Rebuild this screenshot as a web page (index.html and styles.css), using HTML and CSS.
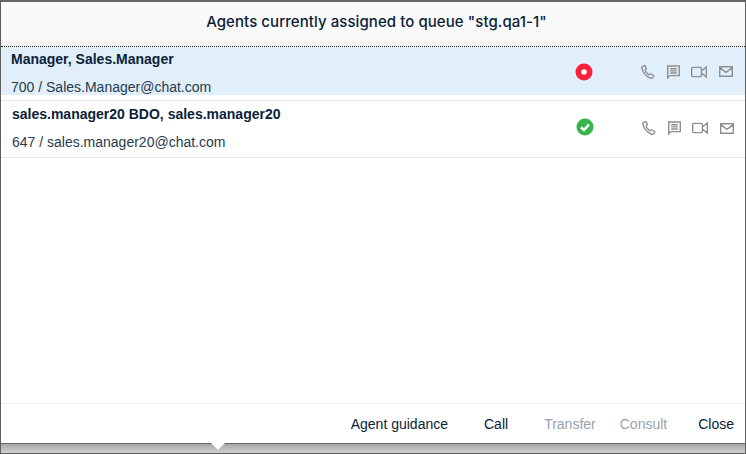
FILE: index.html
```html
<!DOCTYPE html>
<html>

<head>
    <meta charset="utf-8">
    <title>Agents</title>
    <link rel="stylesheet" href="styles.css">
</head>

<body>
    <svg class="sprites" width="0" height="0">
        <symbol id="phone" viewBox="0 0 14 14">
            <path d="M1.6 1.6 L3.3 .7 C3.7 .5 4 .7 4.2 1 L5.3 3.1 C5.5 3.5 5.4 3.8 5.1 4 L4.1 4.8 C4.5 6.6 6.3 9 8 9.8 L9.1 9 C9.4 8.8 9.8 8.8 10.1 9 L12.5 10.5 C12.8 10.7 12.9 11.1 12.7 11.4 L11.8 12.6 C11.2 13.3 10.2 13.5 9.2 13 C5 11 1.8 7 .9 3.3 C.7 2.6 1 2 1.6 1.6 Z" />
        </symbol>
        <symbol id="chat" viewBox="0 0 13 14">
            <path d="M.7 13 V1 H12.3 V10.6 H2.8 Z M3.2 3.8 H9.8 M3.2 5.9 H9.8 M3.2 8 H9.8" />
        </symbol>
        <symbol id="video" viewBox="0 0 16 12">
            <path d="M1.7 1.4 H9.4 C10 1.4 10.4 1.8 10.4 2.4 V9.6 C10.4 10.2 10 10.6 9.4 10.6 H1.7 C1.1 10.6 .7 10.2 .7 9.6 V2.4 C.7 1.8 1.1 1.4 1.7 1.4 Z M10.4 5 L15.3 .9 V11.1 L10.4 7" />
        </symbol>
        <symbol id="mail" viewBox="0 0 14 11">
            <path d="M.7 .7 H13.3 V10.3 H.7 Z M.7 1.6 L7 6.4 L13.3 1.6" />
        </symbol>
    </svg>

    <div class="dialog">
        <div class="dialog-title">Agents currently assigned to queue "stg.qa1-1"</div>

        <div class="agents">
            <div class="agent agent-selected">
                <div class="agent-info">
                    <div class="agent-name">Manager, Sales.Manager</div>
                    <div class="agent-contact">700 / Sales.Manager@chat.com</div>
                </div>
                <svg class="status" viewBox="0 0 18 18">
                    <circle cx="9" cy="9" r="8.5" fill="#f9203a" />
                    <circle cx="9" cy="9" r="2.8" fill="#fff" />
                </svg>
                <div class="actions">
                    <svg class="icon icon-phone"><use href="#phone" /></svg>
                    <svg class="icon icon-chat"><use href="#chat" /></svg>
                    <svg class="icon icon-video"><use href="#video" /></svg>
                    <svg class="icon icon-mail"><use href="#mail" /></svg>
                </div>
            </div>

            <div class="agent agent-second">
                <div class="agent-info">
                    <div class="agent-name">sales.manager20 BDO, sales.manager20</div>
                    <div class="agent-contact">647 / sales.manager20@chat.com</div>
                </div>
                <svg class="status" viewBox="0 0 18 18">
                    <circle cx="9" cy="9" r="8.5" fill="#35b44a" />
                    <path d="M5 9.2 L8 12 L13 6.4" fill="none" stroke="#fff" stroke-width="2.6" />
                </svg>
                <div class="actions">
                    <svg class="icon icon-phone"><use href="#phone" /></svg>
                    <svg class="icon icon-chat"><use href="#chat" /></svg>
                    <svg class="icon icon-video"><use href="#video" /></svg>
                    <svg class="icon icon-mail"><use href="#mail" /></svg>
                </div>
            </div>
        </div>

        <div class="dialog-footer">
            <a class="button">Agent guidance</a>
            <a class="button">Call</a>
            <a class="button disabled">Transfer</a>
            <a class="button disabled">Consult</a>
            <a class="button button-close">Close</a>
        </div>
    </div>

    <div class="shade">
        <span class="notch"></span>
    </div>
</body>

</html>
```

FILE: styles.css
```css
html,
body {
    margin: 0;
    height: 454px;
    overflow: hidden;
}

body {
    display: flex;
    flex-direction: column;
    box-sizing: border-box;
    background-color: #fff;
    border-top: 2px solid #666;
    border-left: 1px solid #5f5f5f;
    border-right: 1px solid #5f5f5f;
    border-bottom: 1px solid #5f5f5f;
    font-family: "Liberation Sans", Arial, sans-serif;
    color: #0b2238;
}

.sprites {
    position: absolute;
}

.dialog {
    flex: 1;
    display: flex;
    flex-direction: column;
    min-height: 0;
}

.dialog-title {
    height: 39px;
    line-height: 39px;
    padding-left: 7px;
    text-align: center;
    background-color: #fafafa;
    border-bottom: 5px solid #f3f3f3;
    font-family: Inter, sans-serif;
    font-size: 15px;
    font-weight: 500;
    letter-spacing: .07px;
    color: #0b2238;
}

.agents {
    flex: 1;
    border-top: 1px dotted #222;
}

.agent {
    display: flex;
    align-items: center;
    box-sizing: border-box;
    border-bottom: 1px solid #e6e6e6;
}

.agent-selected {
    height: 54px;
    padding: 0 12px 6px 10px;
    background: linear-gradient(#e1effb 48px, #fff 48px);
}

.agent-second {
    height: 57px;
    padding: 0 11px 0 11px;
}

.agent-info {
    flex: 1;
}

.agent-name {
    font-size: 14px;
    font-weight: 700;
    line-height: 16px;
}

.agent-contact {
    margin-top: 12px;
    font-size: 14px;
    line-height: 16px;
    color: #263b4e;
}

.agent-selected .agent-info {
    margin-top: 4px;
}

.agent-second .agent-info {
    margin-top: -2px;
}

.status {
    width: 18px;
    height: 18px;
    margin-right: 48px;
}

.agent-selected .status,
.agent-selected .actions {
    margin-top: 2px;
}

.agent-second .status {
    margin-top: -5px;
}

.agent-second .actions {
    margin-top: -2px;
}

.actions {
    display: flex;
    align-items: center;
    gap: 12px;
}

.icon {
    fill: none;
    stroke: #8f8f8f;
    stroke-width: 1.4;
}

.icon-phone {
    width: 14px;
    height: 14px;
}

.icon-chat {
    width: 13px;
    height: 14px;
}

.icon-video {
    width: 16px;
    height: 12px;
    margin-left: -1px;
}

.icon-mail {
    width: 14px;
    height: 11px;
}

.dialog-footer {
    display: flex;
    justify-content: flex-end;
    align-items: center;
    height: 39px;
    padding-right: 11px;
    border-top: 1px solid #efefef;
}

.button {
    margin-left: 36px;
    font-size: 14px;
    color: #0b2238;
}

.button.disabled {
    color: #98a3ad;
}

.button.disabled + .disabled {
    margin-left: 24px;
}

.button-close {
    margin-left: 31px;
}

.shade {
    position: relative;
    flex: none;
    box-sizing: border-box;
    height: 10px;
    border-top: 1px solid #666;
    background: linear-gradient(#a8a8a8, #cfcfcf);
}

.notch {
    position: absolute;
    top: -1px;
    left: 210px;
    border-left: 7.5px solid transparent;
    border-right: 7.5px solid transparent;
    border-top: 7.5px solid #fff;
}
```
